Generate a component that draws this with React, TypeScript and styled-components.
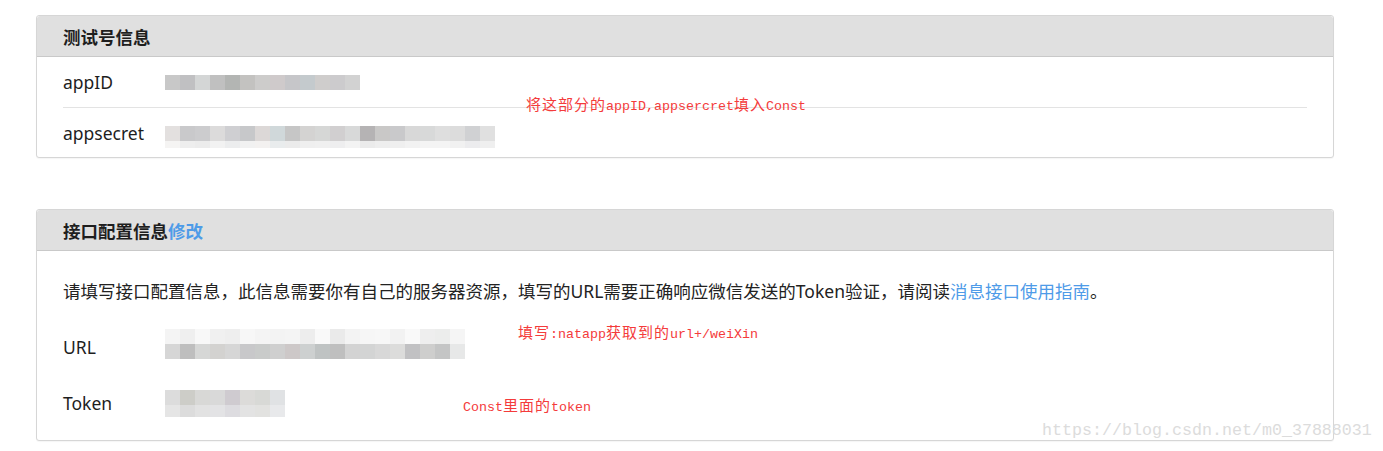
import React from "react";
import styled, { createGlobalStyle } from "styled-components";

const Global = createGlobalStyle`
  html, body { margin: 0; padding: 0; background: #ffffff; }
  body { font-family: "Noto Sans", "Noto Sans CJK SC", sans-serif; }
`;

const Page = styled.div`
  position: relative;
  width: 1383px;
  height: 451px;
  overflow: hidden;
  background: #fff;
  padding: 15px 49px 0 36px;
  box-sizing: border-box;
  display: flex;
  flex-direction: column;
  gap: 51px;
`;

const Panel = styled.section`
  border: 1px solid #d6d6d6;
  border-radius: 3px;
  background: #fff;
  box-shadow: 0 1px 1px rgba(0, 0, 0, 0.04);
`;

const PanelHead = styled.header`
  height: 40px;
  background: #e0e0e0;
  border-bottom: 1px solid #c9c9c9;
  display: flex;
  align-items: center;
  padding: 0 26px;
  font-size: 17.5px;
  font-weight: 700;
  color: #1e1e1e;
  font-family: "Noto Sans CJK SC", sans-serif;
  border-radius: 3px 3px 0 0;
`;

const HeadLink = styled.span`
  color: #4e9be8;
`;

const Body = styled.div<{ $pt: number; $pb: number }>`
  padding: ${(p) => p.$pt}px 26px ${(p) => p.$pb}px;
  display: flex;
  flex-direction: column;
`;

const Row = styled.div<{ $h: number; $divided?: boolean }>`
  height: ${(p) => p.$h}px;
  display: flex;
  align-items: center;
  border-top: ${(p) => (p.$divided ? "1px solid #e3e3e3" : "none")};
  box-sizing: border-box;
  font-size: 17.5px;
  color: #1e1e1e;
`;

const Label = styled.div`
  width: 102px;
  flex: none;
`;

const Desc = styled.p`
  margin: 0 0 16px;
  line-height: 24px;
  font-size: 17.5px;
  color: #222;
`;

const Link = styled.span`
  color: #4e9be8;
`;

const Mosaic = styled.div<{ $shift?: number }>`
  display: flex;
  flex-direction: column;
  margin-top: ${(p) => p.$shift ?? 0}px;
`;

const MosaicRow = styled.div`
  display: flex;
`;

const Tile = styled.span<{ $h: number }>`
  display: block;
  width: 15px;
  height: ${(p) => p.$h}px;
`;

const Note = styled.div<{ $x: number; $y: number }>`
  position: absolute;
  left: ${(p) => p.$x}px;
  top: ${(p) => p.$y}px;
  font-family: "Liberation Mono", "Noto Sans CJK SC", monospace;
  font-size: 13.33px;
  line-height: 16px;
  color: #f43b3b;
  white-space: nowrap;
`;

const Han = styled.span`
  font-family: "Noto Sans CJK SC", sans-serif;
  font-size: 15px;
  letter-spacing: 1px;
`;

const Watermark = styled.div`
  position: absolute;
  left: 1042px;
  top: 420px;
  font-family: "Liberation Mono", monospace;
  font-size: 16.67px;
  line-height: 22px;
  color: #dcdcdc;
  white-space: nowrap;
`;

type MosaicData = { h: number; colors: string[] }[];

const MosaicBlock: React.FC<{ data: MosaicData; shift?: number }> = ({ data, shift }) => (
  <Mosaic $shift={shift}>
    {data.map((r, i) => (
      <MosaicRow key={i}>
        {r.colors.map((c, j) => (
          <Tile key={j} $h={r.h} style={{ background: c }} />
        ))}
      </MosaicRow>
    ))}
  </Mosaic>
);

const appIdMosaic: MosaicData = [
  {
    h: 15,
    colors: ["#c8c8c8", "#c0c0c2", "#d4d6d6", "#c0c0c0", "#b3b5b3", "#c3c2c0", "#cdcccb", "#cfcacb", "#c6c6c9", "#c4cacd", "#cfcdcc", "#cccbcd", "#d2d2d2"],
  },
];

const secretMosaic: MosaicData = [
  {
    h: 15,
    colors: ["#e3e0df", "#c9c9cb", "#ccccce", "#dcdbdb", "#cfcfd2", "#c7c8ca", "#dcd8d7", "#d0d8da", "#c6c6c6", "#d4d3d2", "#d6d7d6", "#d1cfd0", "#d8d9d9", "#b5b3b4", "#c9c8c7", "#c9c9cb", "#d8d8d8", "#d8d9d9", "#dedede", "#dcdcdc", "#d0d1d3", "#e0e0e0"],
  },
  {
    h: 7,
    colors: ["#f5f4f3", "#eeeeee", "#ececec", "#f2f2f2", "#ecedee", "#f1f1f1", "#f3f1f0", "#e9eced", "#ebebeb", "#efefef", "#f0f0f0", "#eeeeef", "#f3f3f3", "#ebebeb", "#eeeeee", "#efefef", "#f2f2f2", "#f4f4f4", "#f4f4f4", "#f1f1f1", "#ececee", "#efefef"],
  },
];

const urlMosaic: MosaicData = [
  {
    h: 15,
    colors: ["#f4f4f4", "#efefef", "#f8f8f8", "#f0f0f0", "#eeeeee", "#f7f7f7", "#f4f4f4", "#f3f3f3", "#f4f4f4", "#ededed", "#f9f9f9", "#eaeaea", "#f3f3f3", "#f6f6f6", "#f7f7f7", "#f2f2f2", "#f9f9f9", "#eeeeee", "#ecedec", "#f5f5f5"],
  },
  {
    h: 15,
    colors: ["#d6d6d6", "#bebebe", "#d6d7d6", "#d3d2d0", "#d6d6d6", "#c8c8ca", "#c9cbca", "#cfcfcf", "#cdc8c8", "#cdd0d0", "#bfc3c3", "#bfbfbf", "#d3d3d3", "#d3d4d4", "#d8d8d8", "#dcdcdb", "#c1c1c3", "#cececd", "#c4c5c5", "#e7e8e8"],
  },
];

const tokenMosaic: MosaicData = [
  { h: 15, colors: ["#dcdcdc", "#cdcdc8", "#d8d8d6", "#d9d9d9", "#cfcbd0", "#dcdbd9", "#d8d9d6", "#e0e2e4"] },
  { h: 12, colors: ["#e5e5e5", "#dcdcdc", "#e2e2e2", "#e3e3e5", "#dddce0", "#e3e3e3", "#e2e2e0", "#e8e9eb"] },
];

export default function App() {
  return (
    <>
      <Global />
      <Page>
        <Panel>
          <PanelHead>测试号信息</PanelHead>
          <Body $pt={0} $pb={0}>
            <Row $h={50}>
              <Label>appID</Label>
              <MosaicBlock data={appIdMosaic} />
            </Row>
            <Row $h={50} $divided>
              <Label>appsecret</Label>
              <MosaicBlock data={secretMosaic} shift={8} />
            </Row>
          </Body>
        </Panel>

        <Panel>
          <PanelHead>
            接口配置信息<HeadLink>修改</HeadLink>
          </PanelHead>
          <Body $pt={28} $pb={9}>
            <Desc>
              请填写接口配置信息，此信息需要你有自己的服务器资源，填写的URL需要正确响应微信发送的Token验证，请阅读
              <Link>消息接口使用指南</Link>。
            </Desc>
            <Row $h={56}>
              <Label>URL</Label>
              <MosaicBlock data={urlMosaic} shift={-6} />
            </Row>
            <Row $h={56}>
              <Label>Token</Label>
              <MosaicBlock data={tokenMosaic} />
            </Row>
          </Body>
        </Panel>

        <Note $x={526} $y={96}>
          <Han>将这部分的</Han>appID,appsercret<Han>填入</Han>Const
        </Note>
        <Note $x={518} $y={324}>
          <Han>填写</Han>:natapp<Han>获取到的</Han>url+/weiXin
        </Note>
        <Note $x={463} $y={397}>
          Const<Han>里面的</Han>token
        </Note>
        <Watermark>https://blog.csdn.net/m0_37888031</Watermark>
      </Page>
    </>
  );
}
